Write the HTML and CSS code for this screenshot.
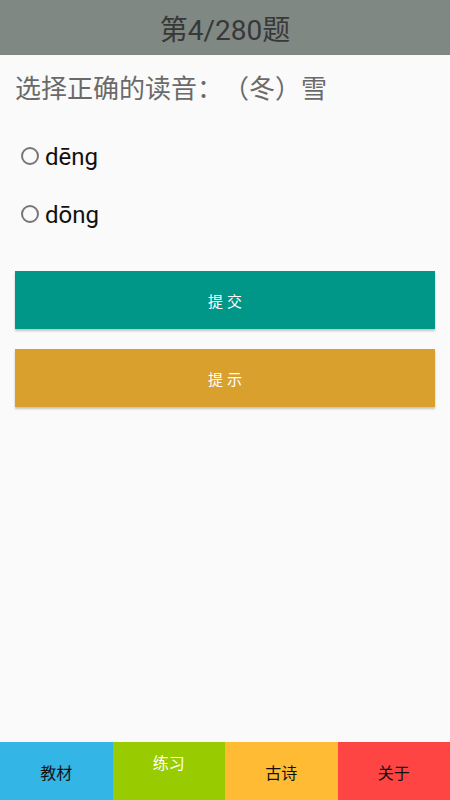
FILE: index.html
```html
<!DOCTYPE html>
<html lang="zh">
<head>
<meta charset="utf-8">
<link rel="stylesheet" href="styles.css">
</head>
<body>
<div class="app">
  <header class="header">第4/280题</header>
  <main class="main">
    <div class="question">选择正确的读音：（冬）雪</div>
    <div class="options">
      <label class="option"><span class="radio"></span><span class="opt-text">dēng</span></label>
      <label class="option"><span class="radio"></span><span class="opt-text">dōng</span></label>
    </div>
    <div class="buttons">
      <div class="btn btn-submit">提交</div>
      <div class="btn btn-hint">提示</div>
    </div>
  </main>
  <nav class="tabbar">
    <div class="tab tab-book">教材</div>
    <div class="tab tab-practice">练习</div>
    <div class="tab tab-poem">古诗</div>
    <div class="tab tab-about">关于</div>
  </nav>
</div>
</body>
</html>
```
FILE: styles.css
```css
html, body {
  margin: 0;
  padding: 0;
  background: #fafafa;
}
body {
  font-family: Roboto, "Noto Sans CJK SC", sans-serif;
}
.app {
  width: 450px;
  height: 800px;
  display: flex;
  flex-direction: column;
}
.header {
  height: 55px;
  background: #7f8883;
  color: #383838;
  font-size: 28px;
  display: flex;
  align-items: center;
  justify-content: center;
  flex-shrink: 0;
}
.main {
  flex: 1;
  display: flex;
  flex-direction: column;
}
.question {
  margin-top: 16px;
  padding-left: 15px;
  font-size: 26px;
  line-height: 36px;
  color: #6a6a6a;
  text-spacing-trim: space-all;
}
.options {
  margin-top: 20px;
  display: flex;
  flex-direction: column;
}
.option {
  height: 58px;
  display: flex;
  align-items: center;
  padding-left: 21px;
}
.radio {
  width: 14px;
  height: 14px;
  border: 2px solid #777;
  border-radius: 50%;
  flex-shrink: 0;
}
.opt-text {
  margin-left: 6px;
  font-size: 24px;
  color: #111;
  line-height: 30px;
  position: relative;
  top: 1px;
}
.buttons {
  margin-top: 28px;
  padding: 0 15px;
  display: flex;
  flex-direction: column;
  gap: 20px;
}
.btn {
  height: 58px;
  display: flex;
  align-items: center;
  justify-content: center;
  color: #fff;
  font-size: 15px;
  letter-spacing: 4px;
  text-indent: 4px;
  box-shadow: 0 2px 2px rgba(0, 0, 0, 0.22);
}
.btn-submit { background: #009688; }
.btn-hint { background: #d9a02e; }
.tabbar {
  height: 58px;
  display: grid;
  grid-template-columns: repeat(4, 1fr);
  flex-shrink: 0;
}
.tab {
  display: flex;
  align-items: center;
  justify-content: center;
  font-size: 16px;
  color: #111;
  padding-top: 2px;
}
.tab-book { background: #33b5e5; }
.tab-practice {
  background: #99cc00;
  color: #fff;
  align-items: flex-start;
  padding-top: 8px;
}
.tab-poem { background: #ffbb33; }
.tab-about { background: #ff4444; }
```
